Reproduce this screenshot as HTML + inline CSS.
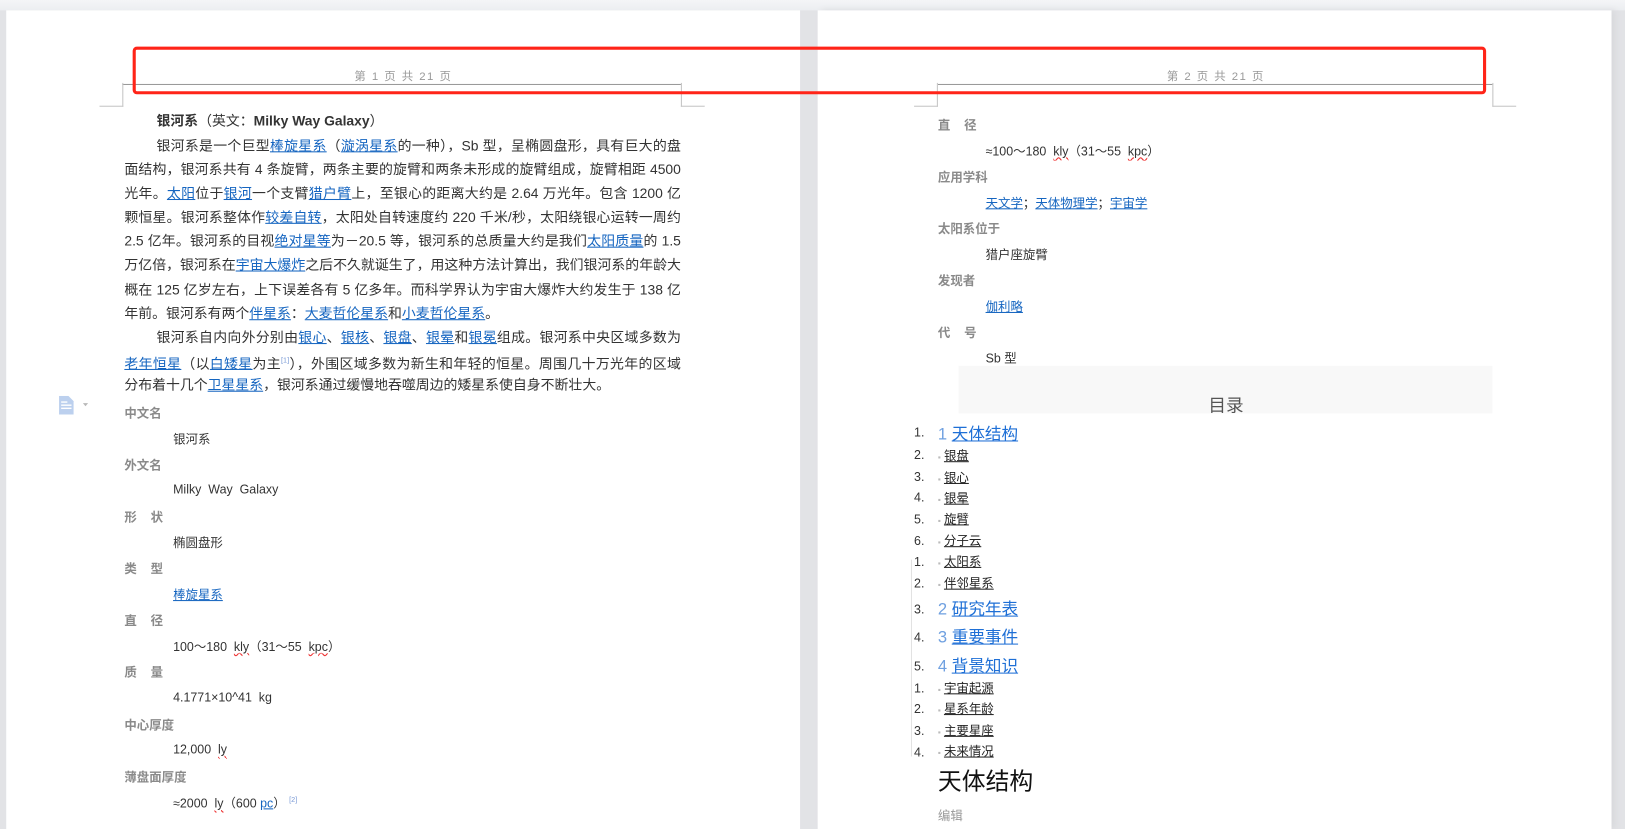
<!DOCTYPE html>
<html><head><meta charset="utf-8">
<style>
*{margin:0;padding:0;box-sizing:border-box}
body{width:1625px;height:819px;overflow:hidden;background:#e2e3e6;position:relative;font-family:"Liberation Sans","Noto Sans CJK SC",sans-serif;color:#333}
#w{position:absolute;left:0;top:0;width:1568px;height:790px;transform:scale(1.03635);transform-origin:0 0}
.top{position:absolute;left:0;top:0;width:1568px;height:10px;background:linear-gradient(#f4f5f7,#eceef1)}
.page{position:absolute;top:10px;background:#fff;height:790px}
.a{position:absolute;white-space:nowrap}
.p{position:absolute;left:120px;width:537px;font-size:13.4px;line-height:23px;text-align:justify;text-align-last:justify;white-space:nowrap;color:#333}
.t{font-size:13.4px;line-height:23px}
a,.l{color:#1565c0;text-decoration:underline}
.lab{position:absolute;font-size:12px;font-weight:bold;color:#8a8a8a}
.val{position:absolute;font-size:12px;color:#333}
.sq{text-decoration:underline wavy #e33;text-decoration-thickness:1px}
.hd{position:absolute;font-size:11px;color:#999;letter-spacing:1.4px}
.ln{position:absolute;background:#999}
.cm{position:absolute;background:#c4c4c4}
.n{position:absolute;left:882px;font-size:12px;color:#333}
.big{position:absolute;left:905px;font-size:16px;color:#1e6fd6}
.big b{font-weight:normal;color:#6fa0e0}
.big u{color:#1e6fd6}
.sm{position:absolute;left:905px;font-size:12px;color:#222}
.sm u{text-decoration:underline}
.sm i{font-style:normal;color:#bbb;font-size:8px;margin-right:3px}
sup{font-size:7px;color:#7a9ad6}
</style></head><body>
<div id="w">
<div class="top"></div>
<div class="page" style="left:6px;width:766px"></div>
<div class="page" style="left:789px;width:766px;box-shadow:4px 0 6px #d8d9dc"></div>

<div class="hd" style="left:342px;top:65px">第 1 页 共 21 页</div>
<div class="hd" style="left:1126px;top:65px">第 2 页 共 21 页</div>
<div class="ln" style="left:118px;top:81px;width:539px;height:1px"></div>
<div class="ln" style="left:905px;top:81px;width:535px;height:1px"></div>
<div class="cm" style="left:118px;top:80px;width:1px;height:23px"></div>
<div class="cm" style="left:96px;top:102px;width:23px;height:1px"></div>
<div class="cm" style="left:657px;top:80px;width:1px;height:23px"></div>
<div class="cm" style="left:657px;top:102px;width:23px;height:1px"></div>
<div class="cm" style="left:904px;top:80px;width:1px;height:23px"></div>
<div class="cm" style="left:882px;top:102px;width:23px;height:1px"></div>
<div class="cm" style="left:1440px;top:80px;width:1px;height:23px"></div>
<div class="cm" style="left:1440px;top:102px;width:23px;height:1px"></div>

<div class="a" style="left:128px;top:45px;width:1306px;height:46px;border:3px solid #ff2418;border-radius:4px"></div>

<div class="a t" style="left:151px;top:105px;color:#333"><b>银河系</b>（英文：<b>Milky Way Galaxy</b>）</div>
<div class="p" style="top:129px;left:151px;width:506px">银河系是一个巨型<a>棒旋星系</a>（<a>漩涡星系</a>的一种），Sb 型，呈椭圆盘形，具有巨大的盘</div>
<div class="p" style="top:152px">面结构，银河系共有 4 条旋臂，两条主要的旋臂和两条未形成的旋臂组成，旋臂相距 4500</div>
<div class="p" style="top:175px">光年。<a>太阳</a>位于<a>银河</a>一个支臂<a>猎户臂</a>上，至银心的距离大约是 2.64 万光年。包含 1200 亿</div>
<div class="p" style="top:198px">颗恒星。银河系整体作<a>较差自转</a>，太阳处自转速度约 220 千米/秒，太阳绕银心运转一周约</div>
<div class="p" style="top:221px">2.5 亿年。银河系的目视<a>绝对星等</a>为－20.5 等，银河系的总质量大约是我们<a>太阳质量</a>的 1.5</div>
<div class="p" style="top:244px">万亿倍，银河系在<a>宇宙大爆炸</a>之后不久就诞生了，用这种方法计算出，我们银河系的年龄大</div>
<div class="p" style="top:268px">概在 125 亿岁左右，上下误差各有 5 亿多年。而科学界认为宇宙大爆炸大约发生于 138 亿</div>
<div class="a t" style="left:120px;top:291px">年前。银河系有两个<a>伴星系</a>：<a>大麦哲伦星系</a>和<a>小麦哲伦星系</a>。</div>
<div class="p" style="top:314px;left:151px;width:506px">银河系自内向外分别由<a>银心</a>、<a>银核</a>、<a>银盘</a>、<a>银晕</a>和<a>银冕</a>组成。银河系中央区域多数为</div>
<div class="p" style="top:337px"><a>老年恒星</a>（以<a>白矮星</a>为主<sup>[1]</sup>），外围区域多数为新生和年轻的恒星。周围几十万光年的区域</div>
<div class="a t" style="left:120px;top:360px">分布着十几个<a>卫星星系</a>，银河系通过缓慢地吞噬周边的矮星系使自身不断壮大。</div>

<svg class="a" style="left:55px;top:382px" width="34" height="18" viewBox="0 0 34 18"><path d="M2 0h9l5 5v13H2z" fill="#bcd0ee"/><path d="M4 6h6M4 9h10M4 12h10" stroke="#fff" stroke-width="1.3"/><path d="M25 7h5l-2.5 3z" fill="#b8b8b8"/></svg>

<div class="lab" style="left:120px;top:390px">中文名</div>
<div class="val" style="left:167px;top:415px">银河系</div>
<div class="lab" style="left:120px;top:440px">外文名</div>
<div class="val" style="left:167px;top:465px">Milky&nbsp; Way&nbsp; Galaxy</div>
<div class="lab" style="left:120px;top:490px">形&nbsp;&nbsp;&nbsp; 状</div>
<div class="val" style="left:167px;top:515px">椭圆盘形</div>
<div class="lab" style="left:120px;top:540px">类&nbsp;&nbsp;&nbsp; 型</div>
<div class="val" style="left:167px;top:565px"><a>棒旋星系</a></div>
<div class="lab" style="left:120px;top:590px">直&nbsp;&nbsp;&nbsp; 径</div>
<div class="val" style="left:167px;top:615px">100～180&nbsp; <span class="sq">kly</span>（31～55&nbsp; <span class="sq">kpc</span>）</div>
<div class="lab" style="left:120px;top:640px">质&nbsp;&nbsp;&nbsp; 量</div>
<div class="val" style="left:167px;top:666px">4.1771×10^41&nbsp; kg</div>
<div class="lab" style="left:120px;top:691px">中心厚度</div>
<div class="val" style="left:167px;top:716px">12,000&nbsp; <span class="sq">ly</span></div>
<div class="lab" style="left:120px;top:741px">薄盘面厚度</div>
<div class="val" style="left:167px;top:766px">≈2000&nbsp; <span class="sq">ly</span>（600 <a>pc</a>）&nbsp;<sup>[2]</sup></div>

<div class="lab" style="left:905px;top:112px">直&nbsp;&nbsp;&nbsp; 径</div>
<div class="val" style="left:951px;top:137px">≈100～180&nbsp; <span class="sq">kly</span>（31～55&nbsp; <span class="sq">kpc</span>）</div>
<div class="lab" style="left:905px;top:162px">应用学科</div>
<div class="val" style="left:951px;top:187px"><a>天文学</a>；<a>天体物理学</a>；<a>宇宙学</a></div>
<div class="lab" style="left:905px;top:212px">太阳系位于</div>
<div class="val" style="left:951px;top:237px">猎户座旋臂</div>
<div class="lab" style="left:905px;top:262px">发现者</div>
<div class="val" style="left:951px;top:287px"><a>伽利略</a></div>
<div class="lab" style="left:905px;top:312px">代&nbsp;&nbsp;&nbsp; 号</div>
<div class="val" style="left:951px;top:337px">Sb 型</div>

<div class="a" style="left:925px;top:353px;width:515px;height:46px;background:#f8f8f8"></div>
<div class="a" style="left:1166px;top:377px;font-size:17px;color:#555">目录</div>
<div class="a" style="left:879px;top:540px;width:1px;height:190px;background:#e2e2e2"></div>

<div class="n" style="top:410px">1.</div><div class="big" style="top:405px"><b>1</b> <u>天体结构</u></div>
<div class="n" style="top:432px">2.</div><div class="sm" style="top:431px"><i>▪</i><u>银盘</u></div>
<div class="n" style="top:453px">3.</div><div class="sm" style="top:452px"><i>▪</i><u>银心</u></div>
<div class="n" style="top:473px">4.</div><div class="sm" style="top:472px"><i>▪</i><u>银晕</u></div>
<div class="n" style="top:494px">5.</div><div class="sm" style="top:492px"><i>▪</i><u>旋臂</u></div>
<div class="n" style="top:515px">6.</div><div class="sm" style="top:513px"><i>▪</i><u>分子云</u></div>
<div class="n" style="top:535px">1.</div><div class="sm" style="top:533px"><i>▪</i><u>太阳系</u></div>
<div class="n" style="top:556px">2.</div><div class="sm" style="top:554px"><i>▪</i><u>伴邻星系</u></div>
<div class="n" style="top:581px">3.</div><div class="big" style="top:574px"><b>2</b> <u>研究年表</u></div>
<div class="n" style="top:608px">4.</div><div class="big" style="top:601px"><b>3</b> <u>重要事件</u></div>
<div class="n" style="top:636px">5.</div><div class="big" style="top:629px"><b>4</b> <u>背景知识</u></div>
<div class="n" style="top:657px">1.</div><div class="sm" style="top:655px"><i>▪</i><u>宇宙起源</u></div>
<div class="n" style="top:677px">2.</div><div class="sm" style="top:675px"><i>▪</i><u>星系年龄</u></div>
<div class="n" style="top:698px">3.</div><div class="sm" style="top:696px"><i>▪</i><u>主要星座</u></div>
<div class="n" style="top:719px">4.</div><div class="sm" style="top:716px"><i>▪</i><u>未来情况</u></div>
<div class="a" style="left:905px;top:735px;font-size:23px;color:#111">天体结构</div>
<div class="a" style="left:905px;top:778px;font-size:12px;color:#999">编辑</div>
</div>
</body></html>
